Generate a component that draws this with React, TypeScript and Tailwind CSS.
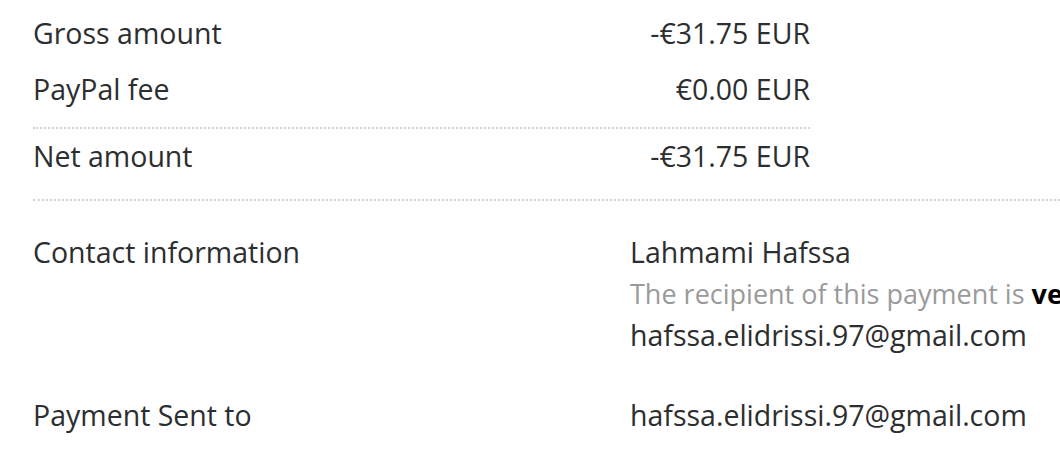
export default function App() {
  const font = { fontFamily: '"Open Sans", Lato, sans-serif' }
  return (
    <div className="w-[1060px] h-[456px] overflow-hidden bg-white text-[#2c2e2f]" style={font}>
      <div className="pl-[33px] pt-[15px]">
        <div className="w-[777px]">
          <div className="flex justify-between text-[28.5px] leading-[36px]">
            <span>Gross amount</span>
            <span>-€31.75 EUR</span>
          </div>
          <div className="flex justify-between text-[28.5px] leading-[36px] mt-[20px]">
            <span>PayPal fee</span>
            <span>€0.00 EUR</span>
          </div>
          <div className="border-t-2 border-dotted border-[#d4d4d4] mt-[20px]" />
          <div className="flex justify-between text-[28.5px] leading-[36px] mt-[9px]">
            <span>Net amount</span>
            <span>-€31.75 EUR</span>
          </div>
        </div>
        <div className="border-t-2 border-dotted border-[#d4d4d4] mt-[25px]" />
        <div className="flex mt-[33px] text-[28.5px] leading-[36px]">
          <div className="w-[597px] shrink-0">Contact information</div>
          <div className="whitespace-nowrap">
            <div>Lahmami Hafssa</div>
            <div className="mt-[2px] text-[27px] leading-[43px] text-[#9a9a9a]">
              The recipient of this payment is <b className="text-black font-bold">verified</b>
            </div>
            <div className="leading-[40px]">hafssa.elidrissi.97@gmail.com</div>
          </div>
        </div>
        <div className="flex mt-[42px] text-[28.5px] leading-[36px]">
          <div className="w-[597px] shrink-0">Payment Sent to</div>
          <div className="whitespace-nowrap">hafssa.elidrissi.97@gmail.com</div>
        </div>
      </div>
    </div>
  )
}
